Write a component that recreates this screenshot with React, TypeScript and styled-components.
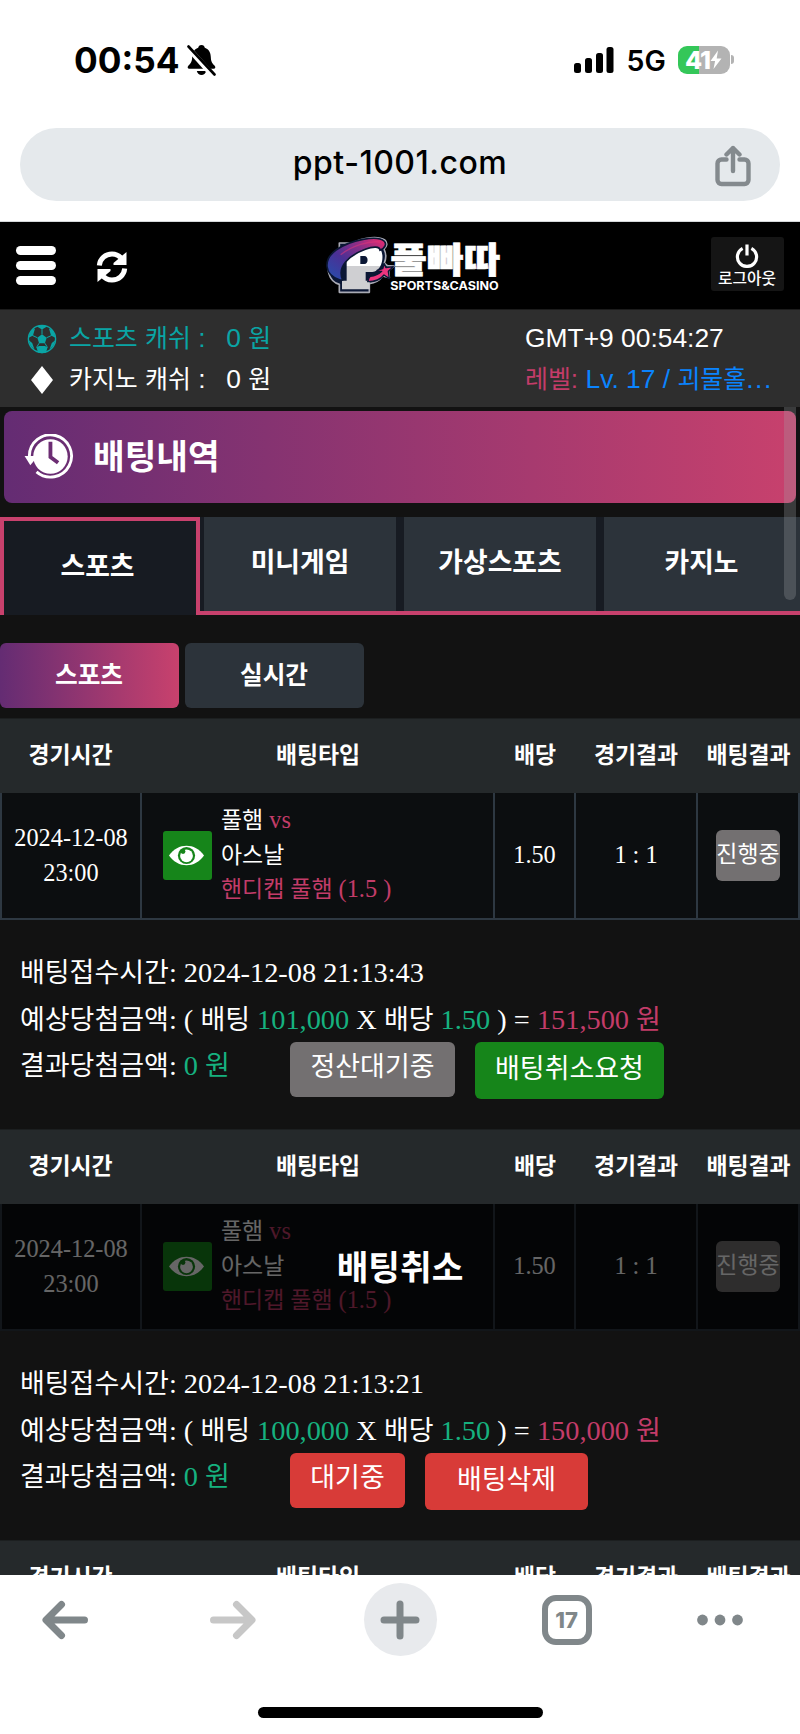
import React from "react";
import styled, { createGlobalStyle } from "styled-components";

const KR = '"Noto Sans CJK KR"';
const SANS = `"Liberation Sans", ${KR}, sans-serif`;
const SERIF = `"Liberation Serif", ${KR}, serif`;
const UI = `Inter, sans-serif`;
const GRADIENT = "linear-gradient(90deg, #642c73, #c8416d)";

const GlobalStyle = createGlobalStyle`
  *, *::before, *::after { box-sizing: border-box; }
  body { margin: 0; background: #fff; }
`;

const Screen = styled.div`
  width: 800px;
  height: 1734px;
  display: flex;
  flex-direction: column;
  overflow: hidden;
  background: #fff;
`;

const Ko = styled.span`
  font-family: ${KR}, sans-serif;
  font-size: 0.944em;
  line-height: 1;
`;

/* ---------- phone status bar ---------- */

const StatusBar = styled.div`
  height: 128px;
  padding: 43px 66px 0 74px;
  display: flex;
  justify-content: space-between;
  align-items: flex-start;
  font-family: ${UI};
  color: #000;
`;
const StatusGroup = styled.div`
  display: flex;
  align-items: center;
  height: 33px;
`;
const Clock = styled.span`
  font-size: 35.2px;
  font-weight: 700;
  line-height: 33px;
  width: 113px;
  padding-top: 1px;
  white-space: nowrap;
`;
const Network = styled.span`
  font-size: 28.5px;
  font-weight: 600;
  line-height: 33px;
  width: 51px;
  padding-top: 2px;
`;
const Battery = styled.div`
  display: flex;
  align-items: center;
  justify-content: center;
  width: 52px;
  height: 28px;
  border-radius: 9px;
  background: linear-gradient(90deg, #34c759 41%, #b3b3b3 41%);
  color: #fff;
  font-size: 25px;
  font-weight: 800;
  letter-spacing: -1px;
`;
const BatteryTip = styled.div`
  width: 3px;
  height: 9px;
  margin-left: 1.5px;
  border-radius: 0 3px 3px 0;
  background: #b3b3b3;
`;

/* ---------- address bar ---------- */

const AddressArea = styled.div`
  height: 94px;
  padding: 0 20px;
  border-bottom: 1px solid #d5d8da;
`;
const AddressPill = styled.div`
  display: grid;
  grid-template-columns: 92px 1fr 92px;
  align-items: center;
  height: 73px;
  border-radius: 37px;
  background: #e5e9ec;
`;
const Address = styled.span`
  grid-column: 2;
  text-align: center;
  font-family: ${UI};
  font-size: 32px;
  font-weight: 500;
  letter-spacing: 0.5px;
  line-height: 40px;
  padding-bottom: 3px;
  color: #000;
`;
const ShareSlot = styled.div`
  display: flex;
  justify-content: flex-end;
  padding: 3px 29px 0 0;
`;

/* ---------- site header ---------- */

const Page = styled.main`
  position: relative;
  height: 1353px;
  flex: none;
  overflow: hidden;
  background: #121212;
  color: #fff;
`;
const Header = styled.header`
  display: grid;
  grid-template-columns: 80px 230px 1fr 89px;
  align-items: start;
  height: 87px;
  background: #000;
`;
const Burger = styled.div`
  display: flex;
  flex-direction: column;
  gap: 6px;
  padding: 24px 0 0 16px;
`;
const BurgerLine = styled.i`
  width: 40px;
  height: 9px;
  border-radius: 4.5px;
  background: #fff;
`;
const RefreshSlot = styled.div`
  padding: 28px 0 0 15px;
`;
const LogoSlot = styled.div`
  padding-top: 8px;
  height: 78px;
`;
const Logout = styled.div`
  display: flex;
  flex-direction: column;
  align-items: center;
  width: 73px;
  height: 54px;
  margin-top: 15px;
  padding-top: 7px;
  padding-right: 1px;
  border-radius: 3px;
  background: #151515;
  font: 500 15.8px/20px ${KR}, sans-serif;
`;

/* ---------- account info ---------- */

const Info = styled.section`
  display: grid;
  grid-template-columns: 525px 1fr;
  height: 98px;
  padding-top: 8px;
  border-top: 1px solid #1c1c1c;
  background: #2e2e2e;
  font: 26.4px/41px ${SANS};
`;
const InfoLine = styled.div<{ $color?: string }>`
  display: flex;
  align-items: baseline;
  height: 41px;
  white-space: pre;
  color: ${(p) => p.$color ?? "#fff"};
`;
const InfoIcon = styled.span`
  display: flex;
  justify-content: center;
  align-self: center;
  width: 30px;
  margin: 0 12px 0 27px;
`;
const CashName = styled.span`
  width: 128px;
`;
const CashAmount = styled.span`
  padding-left: 22px;
`;
const Level = styled.span`
  color: #0a84ff;
`;
const Ellipsis = styled.span`
  letter-spacing: 1.6px;
`;

/* ---------- title and tabs ---------- */

const Banner = styled.h1`
  display: flex;
  align-items: center;
  height: 92px;
  margin: 4px 4px 14px;
  padding: 0 0 0 20px;
  gap: 19px;
  border-radius: 8px;
  background: ${GRADIENT};
  font: 700 34.4px/50px ${KR}, sans-serif;
`;
const BannerText = styled.span`
  padding-bottom: 6px;
`;
const Tabs = styled.nav`
  display: grid;
  grid-template-columns: repeat(4, 200px);
  height: 98px;
`;
const Tab = styled.div<{ $active?: boolean }>`
  display: flex;
  justify-content: center;
  align-items: center;
  padding: ${(p) => (p.$active ? "0 5px 6px 0" : "0 0 6px")};
  font: 700 26.8px/40px ${KR}, sans-serif;
  background: ${(p) =>
    p.$active
      ? "#171b22"
      : "linear-gradient(90deg, #171b22 4px, #2c333a 4px, #2c333a 196px, #171b22 196px)"};
  border-style: solid;
  border-color: #c8416d;
  border-width: ${(p) => (p.$active ? "4px 4px 0" : "0 0 4px")};
  &:last-child {
    padding-left: 3px;
    background: linear-gradient(90deg, #171b22 4px, #2c333a 4px);
  }
`;
const SubTabs = styled.nav`
  display: flex;
  gap: 6px;
  height: 103px;
  padding-top: 28px;
`;
const SubTab = styled.div<{ $active?: boolean }>`
  width: 179px;
  height: 65px;
  padding: 0 1px 6px 0;
  display: flex;
  justify-content: center;
  align-items: center;
  border-radius: 6px;
  background: ${(p) => (p.$active ? GRADIENT : "#2c333a")};
  font: 700 24.7px/36px ${KR}, sans-serif;
`;

/* ---------- bet tables ---------- */

const Bet = styled.article`
  height: 411px;
`;
const HeadRow = styled.div`
  display: grid;
  grid-template-columns: 141px 354px 80px 122px 103px;
  align-items: center;
  height: 75px;
  padding-bottom: 6px;
  background: #25292b;
  border-top: 1px solid #1c1f20;
  text-align: center;
  white-space: nowrap;
  font: 700 22.9px/32px ${KR}, sans-serif;
`;
const Row = styled.div`
  position: relative;
  display: grid;
  grid-template-columns: 140px 353px 81px 122px 102px;
  height: 127px;
  border-left: 2px solid #2e3842;
  border-bottom: 2px solid #2e3842;
  background: #0c0e10;
  font: 24.3px/34.7px ${SERIF};
`;
const Cell = styled.div`
  display: flex;
  align-items: center;
  justify-content: center;
  text-align: center;
  border-right: 2px solid #2e3842;
`;
const MatchCell = styled(Cell)`
  justify-content: flex-start;
  text-align: left;
  padding-left: 21px;
  gap: 9px;
`;
const Watch = styled.div`
  display: flex;
  align-items: center;
  justify-content: center;
  width: 49px;
  height: 49px;
  margin-bottom: 1px;
  padding-right: 3px;
  border-radius: 3px;
  background: #16851a;
`;
const Match = styled.div`
  display: flex;
  flex-direction: column;
  white-space: pre;
  padding-bottom: 1px;
`;
const MatchLine = styled.div<{ $pink?: boolean }>`
  height: 34.7px;
  color: ${(p) => (p.$pink ? "#c33c69" : "#fff")};
`;
const Pink = styled.span`
  color: #c33c69;
`;
const Green = styled.span`
  color: #16b17f;
`;
const Badge = styled.div`
  display: flex;
  justify-content: center;
  width: 64px;
  height: 51px;
  padding-top: 11px;
  border-radius: 6px;
  background: #737071;
  white-space: nowrap;
  line-height: 32px;
`;
const CancelVeil = styled.div`
  position: absolute;
  inset: 0 0 -2px -2px;
  display: flex;
  align-items: center;
  justify-content: center;
  padding-bottom: 5px;
  background: rgba(0, 0, 0, 0.6);
  font: 700 34.4px/50px ${KR}, sans-serif;
`;
const Summary = styled.div`
  padding: 30px 0 0 20px;
  font: 28.35px/46.7px ${SERIF};
  ${Ko} { font-size: 0.952em; }
`;
const SummaryLine = styled.div`
  height: 46.7px;
  white-space: pre;
`;
const ResultLine = styled(SummaryLine)`
  display: flex;
  align-items: baseline;
`;
const Result = styled.span`
  width: 270px;
`;
const Action = styled.div<{ $color: string; $width: number; $tall?: boolean }>`
  align-self: flex-start;
  display: flex;
  justify-content: center;
  width: ${(p) => p.$width}px;
  height: ${(p) => (p.$tall ? 57 : 55)}px;
  margin: -1.4px 20px 0 0;
  padding-top: ${(p) => (p.$tall ? 6 : 4)}px;
  line-height: 42px;
  border-radius: 6px;
  background: ${(p) => p.$color};
`;
const ScrollThumb = styled.div`
  position: absolute;
  top: 185px;
  right: 4px;
  width: 12px;
  height: 193px;
  border-radius: 0 0 6px 6px;
  background: rgba(160, 165, 170, 0.28);
`;

/* ---------- browser toolbar ---------- */

const Toolbar = styled.footer`
  display: flex;
  flex-direction: column;
  align-items: center;
  height: 159px;
  background: #fff;
`;
const ToolRow = styled.div`
  display: grid;
  grid-template-columns: 130px 205px 130px 203px 104px;
  align-items: center;
  justify-items: center;
  height: 89px;
  width: 800px;
`;
const NewTab = styled.div`
  display: flex;
  align-items: center;
  justify-content: center;
  width: 73px;
  height: 73px;
  border-radius: 50%;
  background: #e8eaed;
`;
const TabCount = styled.div`
  display: flex;
  align-items: center;
  justify-content: center;
  width: 50px;
  height: 50px;
  border: 6px solid #80878a;
  border-radius: 14px;
  color: #80878a;
  font: 800 22px/1 ${UI};
`;
const HomeIndicator = styled.div`
  width: 285px;
  height: 11px;
  margin-top: 43px;
  border-radius: 6px;
  background: #000;
`;

/* ---------- icons ---------- */

const BellOff = () => (
  <svg width="29" height="32" viewBox="0 0 29 32">
    <path d="M14.500 1c-2 0-3 1.200-3.300 2.800C6.800 5.500 5.300 9 5.200 13c-.2 4.500-1.200 6-3.700 8.600-1.500 1.600-.9 3.200.9 3.200h24.200c1.800 0 2.400-1.600.9-3.200-2.500-2.600-3.500-4.100-3.700-8.600-.1-4-1.600-7.500-6-9.200C17.500 2.200 16.500 1 14.500 1zM9.800 27c.7 2.600 2.500 4 4.700 4s4-1.400 4.700-4z" fill="#000" />
    <path d="M-1 1.500 27 33" stroke="#fff" strokeWidth="5.500" />
    <path d="M1.500 2.500 27.500 30.500" stroke="#000" strokeWidth="2.600" strokeLinecap="round" />
  </svg>
);

const Signal = () => (
  <svg width="53" height="26" viewBox="0 0 53 26" fill="#000">
    <rect x="0" y="16" width="7" height="10" rx="2.500" />
    <rect x="11" y="11" width="7" height="15" rx="2.500" />
    <rect x="22" y="6" width="7" height="20" rx="2.500" />
    <rect x="32.500" y="0" width="7" height="26" rx="2.500" />
  </svg>
);

const Bolt = () => (
  <svg width="12" height="20" viewBox="0 0 12 20">
    <path d="M8 .5.500 11h4.600L3.500 19 11.500 8.500H6.700z" fill="#fff" />
  </svg>
);

const Share = () => (
  <svg width="36" height="42" viewBox="0 0 36 42" fill="none" stroke="#848a8e" strokeWidth="4.400" strokeLinecap="round" strokeLinejoin="round">
    <path d="M11.500 14.500H6.500a4 4 0 0 0-4 4V35a4 4 0 0 0 4 4h23a4 4 0 0 0 4-4V18.500a4 4 0 0 0-4-4h-5M18 26V3M11.500 9.500 18 3l6.500 6.500" />
  </svg>
);

const Refresh = () => (
  <svg width="34" height="34" viewBox="0 0 34 34">
    <path d="M4.300 15.500C5 8.500 10.500 4 17 4c4 0 7.500 1.800 9.800 5M29.700 18.500C29 25.500 23.500 30 17 30c-4 0-7.500-1.800-9.800-5" fill="none" stroke="#fff" strokeWidth="5" />
    <path d="M31.500 2v13H18.500v-2zM2.500 32V19h13v2z" fill="#fff" />
  </svg>
);

const Power = () => (
  <svg width="24" height="24" viewBox="0 0 24 24" fill="none" stroke="#fff" strokeWidth="3.200">
    <path d="M7.600 4.300a9.600 9.600 0 1 0 8.800 0M12 .5v11" />
  </svg>
);

const Logo = () => (
  <svg width="200" height="70" viewBox="0 0 600 210">
    <defs>
      <linearGradient id="swoosh" x1="0" y1="1" x2="1" y2="0">
        <stop offset="0" stopColor="#2450ae" />
        <stop offset=".4" stopColor="#4a3095" />
        <stop offset=".7" stopColor="#8e2f86" />
        <stop offset="1" stopColor="#f02a6e" />
      </linearGradient>
      <linearGradient id="letter" x1="0" y1="0" x2="0" y2="1">
        <stop offset=".46" stopColor="#fff" />
        <stop offset=".46" stopColor="#cfcfd2" />
      </linearGradient>
    </defs>
    <g strokeLinejoin="round">
      <path d="M88 39h40C160 22 205 17 224 30c10 8 7 20-2 27 6 12 6 30 1 42l9 8 20 1-16 13 2 22-20-5c-10 14-23 21-40 23v26H88v-24C55 155 46 112 63 83c7-12 15-20 25-27z" fill="#0b1735" stroke="#a9aab4" strokeWidth="5" />
      <path d="M98 48h97c32 0 30 74-8 78h-20v26h12v26H96v-26h14V75H98z" fill="url(#letter)" />
      <path d="M151 78h12c13 0 13 24 0 24h-12z" fill="#0b1735" />
      <path d="M90 150C40 134 40 88 78 60 122 29 202 15 222 33c9 8 4 22-12 28 0-13-22-12-44-3-48 18-86 50-68 92z" fill="url(#swoosh)" stroke="#0b1735" strokeWidth="5" />
      <path d="M92 74c35-28 85-42 118-38" fill="none" stroke="#e0357a" strokeWidth="4" opacity=".55" />
      <path d="m223 101 5 12 22-3-15 14 3 22-16-11c-11 15-25 20-49 20 4-6 1-10 8-16 13-1 24-5 34-15l-14-3 17-5z" fill="#ed357e" stroke="#0b1735" strokeWidth="4" />
    </g>
    <text x="241" y="128" textLength="330" lengthAdjust="spacingAndGlyphs" fontFamily={KR} fontWeight="900" fontSize="107" fill="#fff" stroke="#fff" strokeWidth="2">풀빠따</text>
    <text x="241" y="181" textLength="325" lengthAdjust="spacingAndGlyphs" fontFamily="Inter, sans-serif" fontWeight="700" fontSize="35" fill="#fff">SPORTS&amp;CASINO</text>
  </svg>
);

const Ball = () => (
  <svg width="30" height="30" viewBox="0 0 30 30">
    <circle cx="15" cy="15" r="13.600" fill="none" stroke="#0aa5a5" strokeWidth="1.400" />
    <g fill="#0aa5a5">
      <path d="m15 10.300 4.700 3.400-1.800 5.500h-5.800l-1.800-5.500z" />
      <path d="M9.500 2.300 15 5.600l5.500-3.300-5.500-1.300zM1.300 14l4.700-2.500L8 4.500 4 6.500zM28.700 14l-4.700-2.500L22 4.500l4 2zM1.500 16l3.700 3L7.500 25.500l-4-4zM28.500 16l-3.700 3-2.300 6.500 4-4zM11 28.500l-1.500-5L12 22h6l2.500 1.500-1.500 5-4 .7z" />
    </g>
    <path d="M15 10.300V5.200M10.300 13.700 5.500 11.500M19.700 13.700l4.800-2.200M12.100 19.200 9.500 23.500M17.900 19.200l2.600 4.300" stroke="#0aa5a5" strokeWidth="1" fill="none" />
  </svg>
);

const Diamond = () => (
  <svg width="22" height="28" viewBox="0 0 22 28">
    <path d="M11 0 22 14 11 28 0 14z" fill="#fff" />
  </svg>
);

const History = () => (
  <svg width="50" height="46" viewBox="0 0 52 48" fill="none">
    <path d="M5.500 23A22 22 0 1 1 13 39.500" stroke="#fff" strokeWidth="3" />
    <path d="M.5 23h14L6.500 32.500z" fill="#fff" />
    <circle cx="27.500" cy="23.500" r="18" fill="#fff" />
    <path d="M27.500 8v16l8 6" stroke="#6c2d73" strokeWidth="4" />
  </svg>
);

const Eye = () => (
  <svg width="35" height="21" viewBox="0 0 35 21">
    <path d="M0 10.500C9-2.500 26-2.500 35 10.500 26 23.500 9 23.500 0 10.500z" fill="#fff" />
    <circle cx="17.500" cy="10.500" r="8.600" fill="#16851a" />
    <circle cx="17.500" cy="10.800" r="6.400" fill="#fff" />
    <circle cx="14" cy="6.500" r="2.400" fill="#16851a" />
  </svg>
);

const Arrow = ({ forward }: { forward?: boolean }) => (
  <svg width="46" height="40" viewBox="0 0 46 40" fill="none" stroke={forward ? "#c7c7c7" : "#80878a"} strokeWidth="7" strokeLinecap="round" strokeLinejoin="round">
    <path d={forward ? "M3.500 20h38M26.500 4.500 42 20 26.500 35.500" : "M42.500 20h-38M19.500 4.500 4 20l15.500 15.500"} />
  </svg>
);

const Plus = () => (
  <svg width="40" height="40" viewBox="0 0 40 40" stroke="#80878a" strokeWidth="7" strokeLinecap="round">
    <path d="M4 20h32M20 4v32" />
  </svg>
);

const Dots = () => (
  <svg width="48" height="12" viewBox="0 0 48 12" fill="#80878a">
    <circle cx="6.500" cy="6" r="5.400" />
    <circle cx="24" cy="6" r="5.400" />
    <circle cx="41.500" cy="6" r="5.400" />
  </svg>
);

/* ---------- composed parts ---------- */

const HeadCells = () => (
  <HeadRow>
    {["경기시간", "배팅타입", "배당", "경기결과", "배팅결과"].map((t) => (
      <span key={t}>{t}</span>
    ))}
  </HeadRow>
);

interface ActionData {
  label: string;
  color: string;
  width: number;
}
interface BetData {
  placed: string;
  stake: string;
  payout: string;
  cancelled?: boolean;
  actions: ActionData[];
}

const bets: BetData[] = [
  {
    placed: "2024-12-08 21:13:43",
    stake: "101,000",
    payout: "151,500",
    actions: [
      { label: "정산대기중", color: "#737071", width: 165 },
      { label: "배팅취소요청", color: "#16851a", width: 189 },
    ],
  },
  {
    placed: "2024-12-08 21:13:21",
    stake: "100,000",
    payout: "150,000",
    cancelled: true,
    actions: [
      { label: "대기중", color: "#d83b38", width: 115 },
      { label: "배팅삭제", color: "#d83b38", width: 163 },
    ],
  },
];

const BetCard = ({ bet }: { bet: BetData }) => (
  <Bet>
    <HeadCells />
    <Row>
      <Cell>2024-12-08<br />23:00</Cell>
      <MatchCell>
        <Watch><Eye /></Watch>
        <Match>
          <MatchLine><Ko>풀햄</Ko> <Pink>vs</Pink></MatchLine>
          <MatchLine><Ko>아스날</Ko></MatchLine>
          <MatchLine $pink><Ko>핸디캡</Ko> <Ko>풀햄</Ko> (1.5 )</MatchLine>
        </Match>
      </MatchCell>
      <Cell>1.50</Cell>
      <Cell>1 : 1</Cell>
      <Cell><Badge><Ko>진행중</Ko></Badge></Cell>
      {bet.cancelled && <CancelVeil>배팅취소</CancelVeil>}
    </Row>
    <Summary>
      <SummaryLine><Ko>배팅접수시간</Ko>: {bet.placed}</SummaryLine>
      <SummaryLine>
        <Ko>예상당첨금액</Ko>: ( <Ko>배팅</Ko> <Green>{bet.stake}</Green> X <Ko>배당</Ko> <Green>1.50</Green> ) = <Pink>{bet.payout} <Ko>원</Ko></Pink>
      </SummaryLine>
      <ResultLine>
        <Result><Ko>결과당첨금액</Ko>: <Green>0 <Ko>원</Ko></Green></Result>
        {bet.actions.map((a, i) => (
          <Action key={a.label} $color={a.color} $width={a.width} $tall={i === 1}>
            <span><Ko>{a.label}</Ko></span>
          </Action>
        ))}
      </ResultLine>
    </Summary>
  </Bet>
);

export default function App() {
  return (
    <Screen>
      <GlobalStyle />
      <StatusBar>
        <StatusGroup>
          <Clock>00:54</Clock>
          <BellOff />
        </StatusGroup>
        <StatusGroup>
          <Signal />
          <Network>5G</Network>
          <Battery>41<Bolt /></Battery>
          <BatteryTip />
        </StatusGroup>
      </StatusBar>
      <AddressArea>
        <AddressPill>
          <Address>ppt-1001.com</Address>
          <ShareSlot><Share /></ShareSlot>
        </AddressPill>
      </AddressArea>
      <Page>
        <Header>
          <Burger><BurgerLine /><BurgerLine /><BurgerLine /></Burger>
          <RefreshSlot><Refresh /></RefreshSlot>
          <LogoSlot><Logo /></LogoSlot>
          <Logout><Power />로그아웃</Logout>
        </Header>
        <Info>
          <div>
            <InfoLine $color="#0aa5a5">
              <InfoIcon><Ball /></InfoIcon>
              <CashName><Ko>스포츠</Ko> <Ko>캐쉬</Ko> :</CashName>
              <CashAmount> 0 <Ko>원</Ko></CashAmount>
            </InfoLine>
            <InfoLine>
              <InfoIcon><Diamond /></InfoIcon>
              <CashName><Ko>카지노</Ko> <Ko>캐쉬</Ko> :</CashName>
              <CashAmount> 0 <Ko>원</Ko></CashAmount>
            </InfoLine>
          </div>
          <div>
            <InfoLine>GMT+9 00:54:27</InfoLine>
            <InfoLine $color="#c33c69"><Ko>레벨</Ko>: <Level>Lv. 17 / <Ko>괴물홀</Ko><Ellipsis>...</Ellipsis></Level></InfoLine>
          </div>
        </Info>
        <Banner><History /><BannerText>배팅내역</BannerText></Banner>
        <Tabs>
          <Tab $active>스포츠</Tab>
          <Tab>미니게임</Tab>
          <Tab>가상스포츠</Tab>
          <Tab>카지노</Tab>
        </Tabs>
        <SubTabs>
          <SubTab $active>스포츠</SubTab>
          <SubTab>실시간</SubTab>
        </SubTabs>
        {bets.map((b) => <BetCard key={b.placed} bet={b} />)}
        <HeadCells />
        <ScrollThumb />
      </Page>
      <Toolbar>
        <ToolRow>
          <Arrow />
          <Arrow forward />
          <NewTab><Plus /></NewTab>
          <TabCount>17</TabCount>
          <Dots />
        </ToolRow>
        <HomeIndicator />
      </Toolbar>
    </Screen>
  );
}
